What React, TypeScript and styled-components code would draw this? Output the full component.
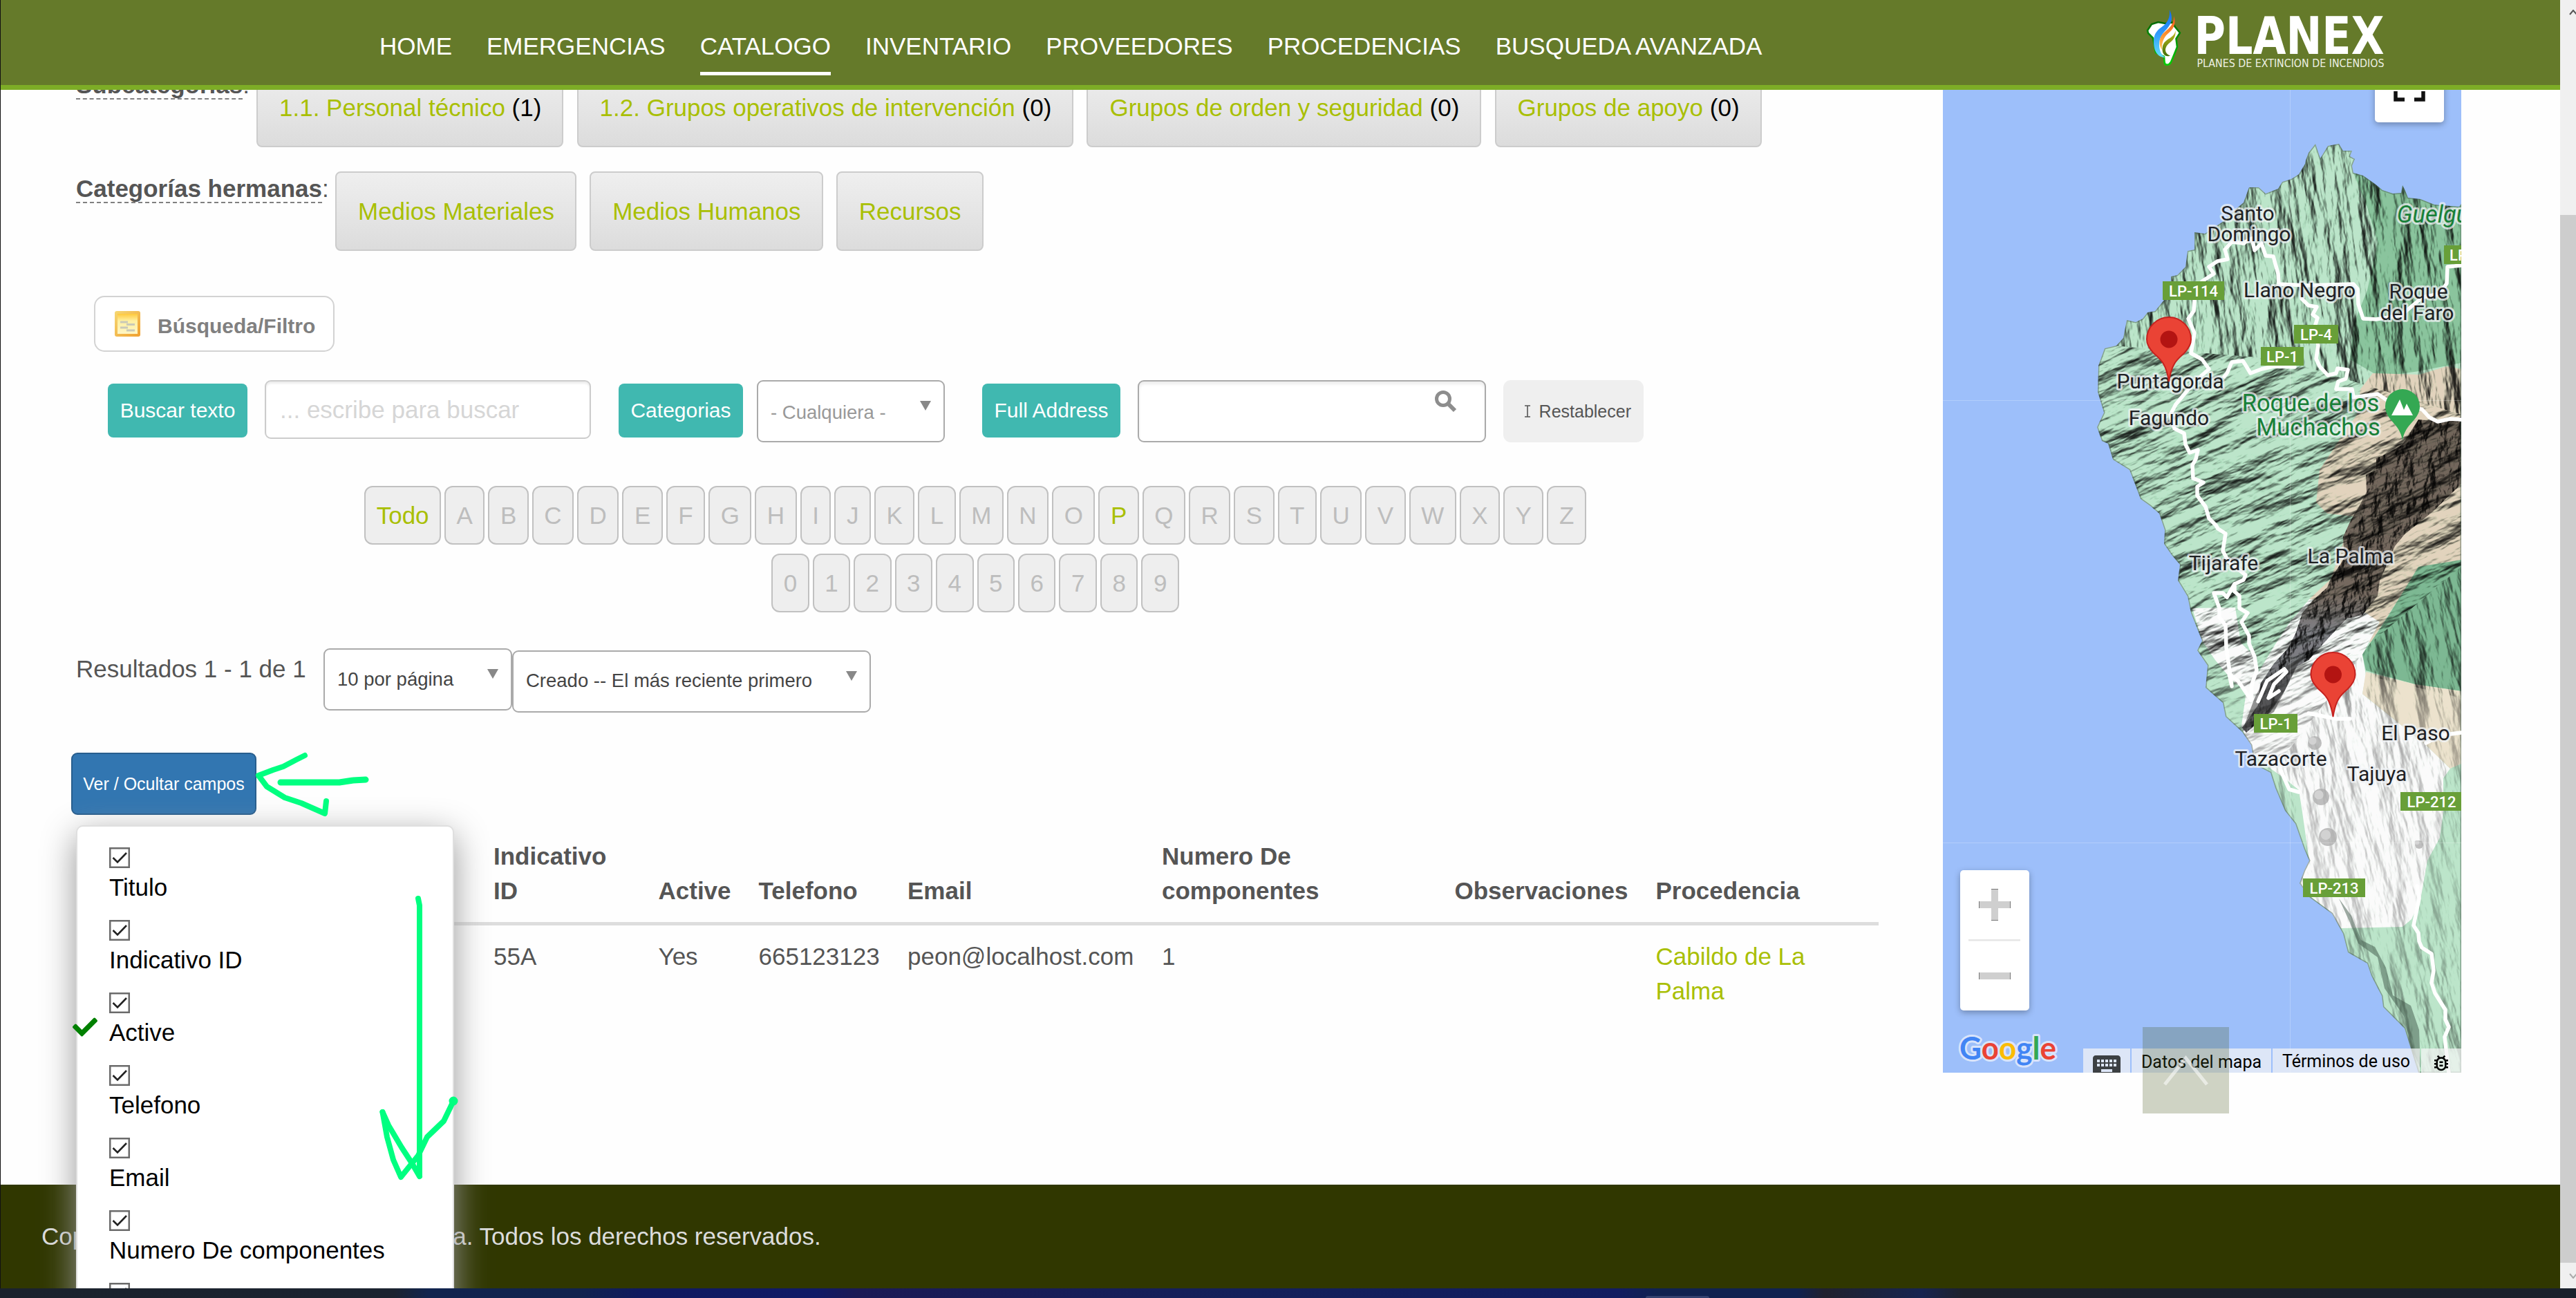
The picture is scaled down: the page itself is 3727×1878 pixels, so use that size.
import React from 'react';
import styled, { createGlobalStyle, css } from 'styled-components';
import { FaCheck } from 'react-icons/fa';
import { MdKeyboard, MdOutlineBugReport } from 'react-icons/md';

const GlobalStyle = createGlobalStyle`
  *, *::before, *::after { box-sizing: border-box; }
  html, body { margin: 0; padding: 0; overflow: hidden; }
  body { font-family: "Liberation Sans", Arial, sans-serif; font-size: 35px; line-height: 50px; color: #555; background: #fefefe; }
`;

const LIME = '#a9bf04';
const TEAL = '#40b8b0';

const Screen = styled.div`
  width: 3727px;
  height: 1878px;
  display: flex;
  flex-direction: column;
  overflow: hidden;
`;

const Viewport = styled.div`
  position: relative;
  height: 1864px;
  display: flex;
  border-left: 1px solid #111;
`;

const Page = styled.div`
  width: 3703px;
  display: flex;
  flex-direction: column;
  overflow: hidden;
  background: #fefefe;
`;

const Header = styled.header`
  position: relative;
  z-index: 3;
  flex: none;
  height: 130px;
  display: flex;
  justify-content: space-between;
  background: #657a2a;
  border-bottom: 7px solid #7dad26;
  padding: 0 254px 0 548px;
`;

const Nav = styled.nav`
  display: flex;
  gap: 50px;
  padding-top: 42px;
`;

const NavLink = styled.a<{ $active?: boolean }>`
  height: 67px;
  color: #fff;
  white-space: nowrap;
  border-bottom: 5px solid ${(p) => (p.$active ? '#fff' : 'transparent')};
`;

const Brand = styled.svg`
  display: block;
  width: 348px;
  height: 110px;
`;

const Main = styled.main`
  flex: none;
  height: 1584px;
  display: flex;
  padding: 0 143px 0 109px;
  justify-content: space-between;
`;

const Content = styled.section`
  width: 2608px;
  display: flex;
  flex-direction: column;
  align-items: flex-start;
`;

const CategoryRow = styled.div<{ $top: number }>`
  display: flex;
  height: 115px;
  margin-top: ${(p) => p.$top}px;
`;

const RowLabel = styled.div<{ $width: number }>`
  width: ${(p) => p.$width}px;
  flex: none;
  white-space: nowrap;
`;

const Term = styled.strong`
  border-bottom: 2px dashed #808080;
`;

const Chips = styled.div`
  display: flex;
  gap: 19.2px;
`;

const Chip = styled.div`
  height: 115px;
  padding: 31px 30px 31px 31px;
  border: 2px solid #ccc;
  border-radius: 8px;
  background: linear-gradient(#efefef, #dcdcdc);
  color: #000;
  white-space: nowrap;
  a { color: ${LIME}; }
`;

const FilterToggle = styled.button`
  height: 81px;
  width: 348px;
  margin: 65px 0 0 26px;
  padding: 0 0 0 28px;
  display: flex;
  align-items: center;
  gap: 25px;
  border: 2px solid #d3d3d3;
  border-radius: 15px;
  background: #fff;
  color: #808080;
  font: bold 30px "Liberation Sans", Arial, sans-serif;
  span { padding-top: 6px; }
`;

const FilterRow = styled.form`
  display: flex;
  height: 90px;
  margin: 41px 0 0 46px;
`;

const FieldTag = styled.label<{ $width: number; $left?: number }>`
  width: ${(p) => p.$width}px;
  height: 78px;
  margin: 5px 0 0 ${(p) => p.$left ?? 0}px;
  border-radius: 8px;
  background: ${TEAL};
  color: #fff;
  font-size: 30px;
  line-height: 78px;
  text-align: center;
  white-space: nowrap;
`;

const SearchInput = styled.input`
  width: 472px;
  height: 85px;
  margin-left: 25px;
  padding: 0 20px;
  border: 2px solid #ccc;
  border-radius: 9px;
  box-shadow: inset 0 3px 3px rgba(0, 0, 0, 0.075);
  background: #fff;
  font: 35px "Liberation Sans", Arial, sans-serif;
  &::placeholder { color: #d6d6d6; opacity: 1; }
`;

const SelectBox = styled.div<{ $width: number; $left?: number; $top?: number; $center?: number; $muted?: boolean }>`
  width: ${(p) => p.$width}px;
  height: 90px;
  margin: ${(p) => p.$top ?? 0}px 0 0 ${(p) => p.$left ?? 0}px;
  padding: 0 18px;
  display: flex;
  justify-content: space-between;
  border: 2px solid #aaa;
  border-radius: 9px;
  background: #fff;
  color: ${(p) => (p.$muted ? '#999' : '#444')};
  font-size: 27.5px;
  line-height: ${(p) => (p.$center ?? 43) * 2}px;
  white-space: nowrap;
`;

const Caret = styled.span`
  width: 0;
  height: 0;
  margin-top: 28px;
  border: 8px solid transparent;
  border-top: 14px solid #888;
  border-bottom: 0;
`;

const AddressBox = styled(SelectBox)`
  justify-content: flex-end;
  padding: 12px 39px 0 0;
  box-shadow: inset 0 4px 4px rgba(0, 0, 0, 0.07);
`;

const ResetButton = styled.button`
  width: 203px;
  height: 90px;
  margin-left: 25px;
  padding: 0 18px 0 31px;
  display: flex;
  justify-content: space-between;
  align-items: center;
  border: 0;
  border-radius: 11px;
  background: #efefef;
  color: #555;
  font: 25px "Liberation Sans", Arial, sans-serif;
`;

const Alphabet = styled.div<{ $top: number }>`
  align-self: stretch;
  display: flex;
  justify-content: center;
  gap: 5px;
  height: 85px;
  margin: ${(p) => p.$top}px 6px 0 0;
`;

const Key = styled.a<{ $on?: boolean }>`
  padding: 0 15.5px;
  border: 2px solid #c1c1c1;
  border-radius: 12px;
  background: #eee;
  color: ${(p) => (p.$on ? LIME : '#bdbdbd')};
  line-height: 81px;
`;

const ResultsRow = styled.div`
  display: flex;
  height: 93px;
  margin-top: 52px;
`;

const ResultCount = styled.div`
  width: 358px;
  line-height: 60px;
`;

const ColumnPicker = styled.div`
  position: relative;
  z-index: 2;
  margin: 58px 0 0 -7px;
`;

const PickerButton = styled.button`
  display: block;
  width: 268px;
  height: 90px;
  padding: 0;
  border: 2px solid #285e8e;
  border-radius: 9px;
  background: #3276b1;
  color: #fff;
  font: 25px "Liberation Sans", Arial, sans-serif;
  white-space: nowrap;
`;

const PickerMenu = styled.ul`
  position: absolute;
  left: 7px;
  top: 105px;
  width: 547px;
  height: 800px;
  margin: 0;
  padding: 30px 0 0 46px;
  list-style: none;
  border: 2px solid #dfdfdf;
  border-radius: 10px;
  background: #fff;
  background-clip: padding-box;
  box-shadow: 0 14px 50px #979797;
  color: #000;
`;

const PickerItem = styled.li`
  position: relative;
  height: 105px;
  display: flex;
  flex-direction: column;
  gap: 3px;
`;

const Box = styled.svg`
  display: block;
  flex: none;
  width: 30px;
  height: 30px;
`;

const SelectedMark = styled(FaCheck)`
  position: absolute;
  left: -53px;
  top: 32px;
  width: 36px;
  height: 36px;
  color: #008000;
`;

const Table = styled.table`
  width: 2608px;
  margin-top: 15px;
  table-layout: fixed;
  border-collapse: separate;
  border-spacing: 0;
  text-align: left;
  th, td { padding: 20px; }
  th { height: 145px; vertical-align: bottom; border-bottom: 5px solid #ddd; }
  td { vertical-align: top; }
  a { color: ${LIME}; }
`;

const MapPanel = styled.aside`
  position: relative;
  width: 750px;
  height: 1422px;
  overflow: hidden;
  background: #9dbffa;
`;

const Terrain = styled.svg`
  display: block;
  width: 750px;
  height: 1422px;
`;

const FullscreenControl = styled.div`
  position: absolute;
  left: 625px;
  top: -53px;
  width: 100px;
  height: 100px;
  display: flex;
  justify-content: center;
  align-items: center;
  border-radius: 5px;
  background: #fff;
  box-shadow: 0 3px 10px rgba(0, 0, 0, 0.3);
`;

const ZoomControl = styled.div`
  position: absolute;
  left: 25px;
  top: 1129px;
  width: 100px;
  height: 203px;
  border-radius: 5px;
  background: #fff;
  box-shadow: 0 3px 10px rgba(0, 0, 0, 0.3);
`;

const Attribution = styled.div`
  position: absolute;
  right: 0;
  bottom: 0;
  height: 35px;
  display: flex;
  gap: 2px;
  color: #000;
  font: 25px/35px Roboto, sans-serif;
`;

const Credit = styled.div<{ $width: number; $drop?: number }>`
  width: ${(p) => p.$width}px;
  height: 35px;
  padding-top: ${(p) => p.$drop ?? 0}px;
  display: flex;
  justify-content: center;
  overflow: hidden;
  white-space: nowrap;
  background: rgba(245, 245, 245, 0.72);
`;

const ToTop = styled.a`
  position: absolute;
  z-index: 3;
  left: 3099px;
  top: 1486px;
  width: 125px;
  height: 125px;
  background: rgba(68, 84, 24, 0.25);
`;

const Footer = styled.footer`
  flex: none;
  height: 150px;
  padding-left: 59px;
  background: #303700;
  color: #dcdcdc;
  line-height: 150px;
  white-space: nowrap;
`;

const Owner = styled.span`
  word-spacing: 1.2px;
`;

const ScrollTrack = styled.div`
  width: 23px;
  height: 1864px;
  padding-top: 311px;
  overflow: hidden;
  background: #f0f0f0;
`;

const ScrollThumb = styled.div`
  height: 1516px;
  background: #cdcdcd;
`;

const ScrollArrow = styled.svg<{ $top: number }>`
  position: absolute;
  left: 3716px;
  top: ${(p) => p.$top}px;
  width: 14px;
  height: 8px;
`;

const Taskbar = styled.div`
  height: 14px;
  display: flex;
  align-items: flex-end;
  padding-left: 2381px;
  background: linear-gradient(90deg, #1b222d 0, #1b2330 570px, #11244e 620px, #11234e 840px, #10195f 930px, #101a66 1180px, #1b1a55 1240px, #14205a 1800px, #121c60 2340px, #102250 2400px, #102250 2600px, #20212e 2640px, #172450 2780px, #1d212c 2840px, #1a212c 100%);
`;

const TaskTab = styled.div`
  width: 92px;
  height: 3px;
  border-radius: 4px 4px 0 0;
  background: #33416f;
`;

const Annotation = styled.svg`
  position: absolute;
  z-index: 4;
  left: 358px;
  top: 1060px;
  width: 340px;
  height: 680px;
  pointer-events: none;
`;

const haloText = css`
  font-family: Roboto, sans-serif;
  font-size: 30px;
  text-anchor: middle;
  paint-order: stroke;
  stroke: rgba(240, 243, 246, 0.72);
  stroke-width: 6px;
  stroke-linejoin: round;
`;

const Place = styled.text`
  ${haloText}
  fill: #202124;
`;

const Park = styled.text`
  ${haloText}
  font-size: 34.5px;
  fill: #188038;
`;

const ShieldText = styled.text`
  font: 500 22px Roboto, sans-serif;
  text-anchor: middle;
  fill: #fff;
`;

const LAND =
  'M3561 295 L3558 299 L3522 296 L3502 288 L3484 286 L3480 276 L3476 268 L3474 279 L3462 280 L3447 275 L3436 266 L3419 254 L3405 250 L3403 240 L3407 230 L3400 226 L3403 218 L3390 218 L3384 208 L3368 211 L3357 229 L3350 208 L3340 221 L3336 232 L3335 237 L3326 252 L3315 259 L3302 263 L3296 273 L3278 280 L3268 271 L3254 271 L3246 293 L3233 304 L3220 318 L3199 332 L3190 338 L3175 336 L3175 361 L3165 363 L3162 386 L3150 398 L3141 400 L3141 414 L3131 434 L3118 450 L3107 452 L3100 461 L3090 466 L3077 463 L3072 489 L3062 500 L3045 504 L3036 529 L3035 567 L3044 597 L3034 618 L3041 638 L3050 642 L3057 665 L3081 680 L3090 703 L3097 722 L3111 732 L3124 743 L3132 767 L3131 787 L3142 803 L3154 817 L3151 840 L3165 863 L3170 887 L3186 927 L3179 941 L3194 963 L3191 995 L3216 1017 L3220 1037 L3244 1059 L3257 1078 L3262 1106 L3285 1118 L3292 1140 L3306 1173 L3321 1192 L3334 1229 L3341 1245 L3334 1259 L3327 1278 L3341 1298 L3374 1322 L3390 1351 L3397 1378 L3425 1394 L3431 1412 L3446 1441 L3448 1457 L3479 1488 L3487 1514 L3499 1552 L3561 1552 Z';

const LOWLAND =
  'M3172 880 L3234 879 L3242 930 L3262 950 L3268 972 L3290 935 L3311 903 L3341 867 L3380 870 L3423 887 L3443 900 L3418 947 L3423 977 L3418 1004 L3459 1037 L3510 1078 L3545 1112 L3535 1126 L3535 1175 L3530 1212 L3512 1245 L3502 1302 L3489 1330 L3476 1341 L3387 1343 L3370 1318 L3327 1285 L3330 1262 L3341 1245 L3331 1175 L3326 1143 L3305 1126 L3285 1112 L3257 1090 L3243 1050 L3250 1000 L3230 985 L3205 955 L3186 927 Z';

const ROCK =
  'M3499 607 L3476 643 L3456 655 L3438 663 L3438 680 L3423 687 L3424 712 L3413 733 L3400 755 L3390 777 L3392 807 L3372 838 L3367 850 L3345 870 L3331 887 L3322 915 L3311 937 L3290 960 L3270 990 L3267 1020 L3244 1053 L3250 1060 L3285 1030 L3305 1000 L3322 965 L3340 955 L3367 925 L3395 895 L3418 890 L3440 862 L3443 840 L3465 790 L3479 773 L3520 740 L3561 700 L3561 603 L3530 610 Z';

const ROADS = [
  'M3247 352 L3229 350 L3219 361 L3223 375 L3208 378 L3196 386 L3203 396 L3186 407 L3175 434 L3174 450 L3166 461 L3175 482 L3170 511 L3186 520 L3196 534 L3180 548 L3163 567 L3148 585 L3140 600 L3146 620 L3160 627 L3162 643 L3168 655 L3180 651 L3177 664 L3172 673 L3173 692 L3188 698 L3179 704 L3179 717 L3191 733 L3196 750 L3206 760 L3209 765 L3220 772 L3216 797 L3224 812 L3249 832 L3246 839 L3233 845 L3233 856 L3240 862 L3240 880 L3252 887 L3243 900 L3254 920 L3254 931 L3262 950 L3265 970 L3258 990 L3257 1013',
  'M3233 845 L3222 864 L3216 858 L3203 858 L3211 880 L3211 893 L3220 905 L3221 937 L3229 993 L3225 975 L3238 985 L3257 1013',
  'M3245 352 L3258 345 L3262 362 L3272 352 L3278 370 L3289 371 L3296 396 L3297 411 L3337 413 L3405 411 L3411 418 L3412 440 L3419 461 L3438 462 L3474 456 L3505 430 L3530 425 L3540 410 L3541 386 L3561 384',
  'M3330 432 L3340 442 L3352 444 L3346 455 L3353 460 L3350 470 L3354 500 L3351 519 L3356 530 L3368 543 L3380 540 L3382 533 L3397 535 L3394 548 L3383 552 L3380 563 L3403 563 L3405 575 L3440 570 L3470 590 L3504 592 L3515 604 L3527 610 L3545 606 L3561 607',
  'M3218 545 L3222 540 L3229 524 L3245 522 L3250 530 L3256 540 L3272 534 L3290 530 L3320 531',
  'M3267 1015 L3280 985 L3305 968 L3308 972 L3290 990 L3282 1010 L3297 1000',
  'M3340 1032 L3380 1040 L3400 1040',
  'M3561 1060 L3530 1064 L3510 1075',
  'M3300 1115 L3312 1142 L3326 1146',
  'M3497 1282 L3500 1300 L3492 1339 L3499 1350 L3500 1362 L3504 1371 L3518 1380 L3521 1404 L3518 1422 L3523 1437 L3538 1461 L3538 1475 L3543 1486 L3537 1500 L3543 1552',
];

const PLACES: [string, number, number][] = [
  ['Santo', 3252, 319],
  ['Domingo', 3254, 349],
  ['Llano Negro', 3327, 430],
  ['Roque', 3499, 432],
  ['del Faro', 3497, 463],
  ['Puntagorda', 3140, 562],
  ['Fagundo', 3138, 615],
  ['La Palma', 3401, 815],
  ['Tijarafe', 3217, 825],
  ['El Paso', 3495, 1071],
  ['Tazacorte', 3300, 1108],
  ['Tajuya', 3439, 1130],
];

const SHIELDS: [string, number, number, number][] = [
  ['LP-114', 3129, 407, 89],
  ['LP-4', 3319, 470, 64],
  ['LP-1', 3271, 502, 62],
  ['LP-1', 3536, 355, 62],
  ['LP-1', 3261, 1033, 63],
  ['LP-212', 3473, 1146, 90],
  ['LP-213', 3332, 1271, 90],
];

const Pin = ({ x, y }: { x: number; y: number }) => (
  <g transform={`translate(${x} ${y})`}>
    <path
      d="M0 0 C-4 -26 -12 -32 -21 -40 C-29 -48 -32 -54 -32 -61 A32 32 0 0 1 32 -61 C32 -54 29 -48 21 -40 C12 -32 4 -26 0 0 Z"
      fill="#ea4335"
      stroke="#c5221f"
      strokeWidth="2"
    />
    <circle cy="-61" r="12.5" fill="#b31412" />
  </g>
);

const IslandMap = () => (
  <Terrain viewBox="2811 130 750 1422">
    <defs>
      <clipPath id="land"><path d={LAND} /></clipPath>
      <clipPath id="rock"><path d={ROCK} /></clipPath>
      <linearGradient id="rockFill" x1="0" y1="600" x2="0" y2="1050" gradientUnits="userSpaceOnUse">
        <stop offset="0" stopColor="#71655a" />
        <stop offset="0.58" stopColor="#75695f" />
        <stop offset="0.7" stopColor="#808086" />
        <stop offset="1" stopColor="#6e6e72" />
      </linearGradient>
      <linearGradient id="reliefFade" x1="0" y1="200" x2="0" y2="1552" gradientUnits="userSpaceOnUse">
        <stop offset="0" stopColor="#fff" />
        <stop offset="0.54" stopColor="#fff" />
        <stop offset="0.62" stopColor="#777" />
        <stop offset="0.8" stopColor="#555" />
        <stop offset="1" stopColor="#aaa" />
      </linearGradient>
      <mask id="fade" maskUnits="userSpaceOnUse" x="2811" y="130" width="750" height="1422">
        <rect x="2811" y="130" width="750" height="1422" fill="url(#reliefFade)" />
        <path d="M3418 890 L3561 810 L3561 1010 L3423 977 Z" fill="#fff" />
      </mask>
      <filter id="relief" x="0" y="0" width="100%" height="100%" colorInterpolationFilters="sRGB">
        <feTurbulence type="fractalNoise" baseFrequency="0.034 0.009" numOctaves="5" seed="7" />
        <feDiffuseLighting surfaceScale="15" diffuseConstant="1.22" lightingColor="#f6fff9">
          <feDistantLight azimuth="215" elevation="50" />
        </feDiffuseLighting>
      </filter>
      <filter id="crag" x="0" y="0" width="100%" height="100%" colorInterpolationFilters="sRGB">
        <feTurbulence type="fractalNoise" baseFrequency="0.05 0.03" numOctaves="5" seed="3" />
        <feDiffuseLighting surfaceScale="13" diffuseConstant="1.25" lightingColor="#fff">
          <feDistantLight azimuth="215" elevation="50" />
        </feDiffuseLighting>
      </filter>
      <clipPath id="north"><path d="M2811 130 H3561 V600 L3300 520 L2811 480 Z" /></clipPath>
      <clipPath id="west"><path d="M2811 480 L3300 520 L3561 600 V820 L3430 930 L3300 1100 L2811 1100 Z" /></clipPath>
      <clipPath id="south"><path d="M3561 820 L3430 930 L3300 1100 H2811 V1552 H3561 Z" /></clipPath>
    </defs>
    <rect x="2811" y="130" width="750" height="1422" fill="#9dbffa" />
    <g clipPath="url(#land)">
      <path d={LAND} fill="#bce5ca" />
      <path d="M3405 250 L3425 300 L3440 350 L3425 420 L3405 470 L3400 520 L3443 545 L3500 537 L3561 525 V280 Z" fill="#8ac49d" />
      <path d="M3433 540 L3500 542 L3540 530 L3561 534 V830 L3499 822 L3479 853 L3430 930 L3341 867 L3372 838 L3392 780 L3405 747 L3367 743 L3351 727 L3356 680 L3387 633 L3410 600 L3415 563 Z" fill="#e2d3bd" />
      <path d={LOWLAND} fill="#fbfbfb" />
      <path d={ROCK} fill="url(#rockFill)" />
      <path d="M3561 810 L3499 820 L3479 853 L3450 900 L3418 947 L3423 970 L3494 990 L3561 1000 Z" fill="#7db893" />
      <path d="M3423 972 L3494 990 L3561 1000 V1105 L3545 1112 L3510 1078 L3459 1037 L3418 1004 Z" fill="#ece2cd" />
      <g mask="url(#fade)" style={{ mixBlendMode: 'multiply' }}>
        <g clipPath="url(#north)">
          <rect x="2950" y="130" width="720" height="560" filter="url(#relief)" transform="rotate(-8 3300 400)" opacity="0.85" />
        </g>
        <g clipPath="url(#west)">
          <g transform="rotate(64 3300 800)">
            <rect x="2850" y="350" width="900" height="900" filter="url(#relief)" opacity="0.85" />
          </g>
        </g>
        <g clipPath="url(#south)">
          <rect x="3150" y="780" width="520" height="900" filter="url(#relief)" transform="rotate(-14 3400 1200)" opacity="0.7" />
        </g>
      </g>
      <g clipPath="url(#rock)" style={{ mixBlendMode: 'multiply' }}>
        <rect x="3230" y="590" width="340" height="480" filter="url(#crag)" opacity="0.85" />
      </g>
      <path d="M3384 1300 L3402 1325 L3416 1360 L3436 1370 L3452 1400 L3462 1440 L3488 1455 L3500 1490 L3502 1545 L3490 1520 L3478 1470 L3450 1430 L3440 1385 L3412 1365 L3400 1335 Z" fill="#3f5849" opacity="0.5" />
      <path d="M3244 1058 L3262 1010 L3275 985 L3330 950 L3318 975 L3290 1030 Z" fill="#3c3c3c" opacity="0.55" />
      {[[3358, 1153, 12], [3368, 1211, 13], [3349, 1075, 10], [3500, 1222, 6]].map(([x, y, r]) => (
        <g key={y}>
          <circle cx={x} cy={y} r={r} fill="#a9a9a9" opacity="0.75" />
          <circle cx={x - 3} cy={y - 3} r={r * 0.55} fill="#d2d2d2" />
        </g>
      ))}
      <path d={LAND} fill="none" stroke="#48604f" strokeWidth="3" opacity="0.5" />
      {ROADS.map((d) => (
        <path key={d} d={d} fill="none" stroke="#fff" strokeWidth="5.5" strokeLinejoin="round" strokeLinecap="round" />
      ))}
    </g>
    <path d="M3313.5 130 V1552 M2811 579.5 H3561 M2811 1219.5 H3561" stroke="#fff" strokeOpacity="0.22" />
    {PLACES.map(([name, x, y]) => (
      <Place key={name} x={x} y={y}>{name}</Place>
    ))}
    <Park x="3343" y="595">Roque de los</Park>
    <Park x="3354" y="630">Muchachos</Park>
    <Park x="3520" y="322" fontStyle="italic">Guelgu</Park>
    {SHIELDS.map(([name, x, y, w]) => (
      <g key={name + y}>
        <rect x={x} y={y} width={w} height="27" fill="#689f38" />
        <ShieldText x={x + w / 2} y={y + 21.5}>{name}</ShieldText>
      </g>
    ))}
    <path d="M3476 637 C3472 612 3451 608 3451 588 A25 25 0 0 1 3501 588 C3501 608 3480 612 3476 637 Z" fill="#34a853" />
    <path d="M3460 601 L3472 578 L3478 593 L3482 584 L3491 601 Z" fill="#fff" />
    <Pin x={3138} y={552} />
    <Pin x={3375.5} y={1037} />
    <text
      x="2835"
      y="1533"
      textLength="140"
      lengthAdjust="spacingAndGlyphs"
      fontFamily="Lato, sans-serif"
      fontWeight="700"
      fontSize="46"
      stroke="#d9e4fb"
      strokeWidth="6"
      strokeLinejoin="round"
      paintOrder="stroke"
    >
      <tspan fill="#4285f4">G</tspan><tspan fill="#ea4335">o</tspan><tspan fill="#fbbc04">o</tspan><tspan fill="#4285f4">g</tspan><tspan fill="#34a853">l</tspan><tspan fill="#ea4335">e</tspan>
    </text>
  </Terrain>
);

const Logo = () => (
  <Brand viewBox="3101 0 348 110">
    <defs>
      <linearGradient id="coast" x1="0" y1="32" x2="0" y2="95" gradientUnits="userSpaceOnUse">
        <stop offset="0" stopColor="#076a07" />
        <stop offset="1" stopColor="#06d006" />
      </linearGradient>
      <linearGradient id="flameBlue" x1="0" y1="14" x2="0" y2="83" gradientUnits="userSpaceOnUse">
        <stop offset="0" stopColor="#0f6cf2" />
        <stop offset="0.5" stopColor="#319bfb" />
        <stop offset="1" stopColor="#62e0fb" />
      </linearGradient>
      <linearGradient id="flameOrange" x1="0" y1="23" x2="0" y2="72" gradientUnits="userSpaceOnUse">
        <stop offset="0" stopColor="#f4501c" />
        <stop offset="0.5" stopColor="#fc8c2c" />
        <stop offset="1" stopColor="#fcc65c" />
      </linearGradient>
      <linearGradient id="flameGreen" x1="0" y1="44" x2="0" y2="82" gradientUnits="userSpaceOnUse">
        <stop offset="0" stopColor="#c4bc1c" />
        <stop offset="1" stopColor="#3f6f06" />
      </linearGradient>
    </defs>
    <path
      d="M3106 44 L3112 35 L3121.500 32 L3132 34 L3142 32.500 L3146 39 L3153 47.500 L3147.500 56 L3149 68 L3145 78 L3140 90 C3137 95 3131 95 3130.500 90 L3130 82 L3118 76 L3114 55 L3107 48 Z"
      fill="#fff"
      stroke="url(#coast)"
      strokeWidth="2.600"
      strokeLinejoin="round"
    />
    <path d="M3137.700 14 C3143 24 3142 33 3134 42 C3128 48 3124 54 3123 62 C3122.500 71 3125 79 3131.500 83 C3122 83 3115 76 3115 60 C3115 48 3121 43 3128 38 C3136 32 3139 24 3137.700 14 Z" fill="url(#flameBlue)" />
    <path d="M3144 23 C3147.500 33 3145 40 3138 46.500 C3131 52 3126 60 3127 72 C3122 66 3122.500 55 3128 49 C3135 42 3145 37 3144 23 Z" fill="url(#flameOrange)" />
    <path d="M3146.700 44 C3147 54 3143 58 3138 62 C3129 69 3131 78 3139 80.500 C3132 83.500 3127 78 3127.500 70 C3128 60 3136 57 3140 54 C3144 51 3146 48 3146.700 44 Z" fill="url(#flameGreen)" />
    <text x="3173.500" y="77.500" textLength="275" lengthAdjust="spacingAndGlyphs" fontFamily="DejaVu Sans, sans-serif" fontWeight="700" fontSize="74" fill="#fff">PLANEX</text>
    <text x="3177.500" y="97" textLength="271" lengthAdjust="spacingAndGlyphs" fontFamily="DejaVu Sans, sans-serif" fontSize="16.500" fill="#edf0e4">PLANES DE EXTINCION DE INCENDIOS</text>
  </Brand>
);

const NAV = ['HOME', 'EMERGENCIAS', 'CATALOGO', 'INVENTARIO', 'PROVEEDORES', 'PROCEDENCIAS', 'BUSQUEDA AVANZADA'];
const SUBCATEGORIES: [string, number][] = [
  ['1.1. Personal técnico', 1],
  ['1.2. Grupos operativos de intervención', 0],
  ['Grupos de orden y seguridad', 0],
  ['Grupos de apoyo', 0],
];
const SIBLINGS = ['Medios Materiales', 'Medios Humanos', 'Recursos'];
const LETTERS = ['Todo', ...'ABCDEFGHIJKLMNOPQRSTUVWXYZ'.split('')];
const FIELDS = ['Titulo', 'Indicativo ID', 'Active', 'Telefono', 'Email', 'Numero De componentes', ''];
const COLUMN_WIDTHS = [584, 238.5, 145, 215.5, 368, 423.5, 291, 342.5];

export default function App() {
  return (
    <Screen>
      <GlobalStyle />
      <Viewport>
        <Page>
          <Header>
            <Nav>
              {NAV.map((item) => (
                <NavLink key={item} $active={item === 'CATALOGO'}>{item}</NavLink>
              ))}
            </Nav>
            <Logo />
          </Header>
          <Main>
            <Content>
              <CategoryRow $top={-32}>
                <RowLabel $width={261}><Term>Subcategorías</Term>:</RowLabel>
                <Chips>
                  {SUBCATEGORIES.map(([name, count]) => (
                    <Chip key={name}><a>{name}</a> ({count})</Chip>
                  ))}
                </Chips>
              </CategoryRow>
              <CategoryRow $top={35}>
                <RowLabel $width={375}><Term>Categorías hermanas</Term>:</RowLabel>
                <Chips>
                  {SIBLINGS.map((name) => (
                    <Chip key={name}><a>{name}</a></Chip>
                  ))}
                </Chips>
              </CategoryRow>

              <FilterToggle>
                <svg width="37" height="37" viewBox="0 0 37 37">
                  <defs>
                    <linearGradient id="note" x1="0" y1="0" x2="1" y2="1">
                      <stop offset="0" stopColor="#f6d873" />
                      <stop offset="1" stopColor="#f0a030" />
                    </linearGradient>
                    <linearGradient id="paper" x1="0" y1="0" x2="0" y2="1">
                      <stop offset="0" stopColor="#ffc93c" />
                      <stop offset="0.35" stopColor="#fff0a0" />
                      <stop offset="1" stopColor="#fff6c4" />
                    </linearGradient>
                  </defs>
                  <rect width="37" height="37" rx="3" fill="url(#note)" />
                  <rect x="4" y="4" width="29" height="29" fill="url(#paper)" />
                  <path d="M8 16 H19 M17 19.500 H29 M8 24 H19 M17 28 H29" stroke="#c9c9b8" strokeWidth="3" />
                </svg>
                <span>Búsqueda/Filtro</span>
              </FilterToggle>

              <FilterRow>
                <FieldTag $width={202}>Buscar texto</FieldTag>
                <SearchInput placeholder="... escribe para buscar" />
                <FieldTag $width={180} $left={40}>Categorias</FieldTag>
                <SelectBox $width={272} $left={20} $center={45} $muted>- Cualquiera - <Caret /></SelectBox>
                <FieldTag $width={200} $left={54}>Full Address</FieldTag>
                <AddressBox $width={504} $left={25}>
                  <svg width="34" height="34" viewBox="0 0 34 34" fill="none" stroke="#8d8d8d">
                    <circle cx="13" cy="13" r="9.500" strokeWidth="5" />
                    <path d="M20 20 L30 30" strokeWidth="6" />
                  </svg>
                </AddressBox>
                <ResetButton type="button">
                  <svg width="8" height="18" viewBox="0 0 8 18" stroke="#555" strokeWidth="1.6">
                    <path d="M0 1 H8 M0 17 H8 M4 1 V17" />
                  </svg>
                  Restablecer
                </ResetButton>
              </FilterRow>

              <Alphabet $top={63}>
                {LETTERS.map((l) => (
                  <Key key={l} $on={l === 'Todo' || l === 'P'}>{l}</Key>
                ))}
              </Alphabet>
              <Alphabet $top={13}>
                {'0123456789'.split('').map((d) => (
                  <Key key={d}>{d}</Key>
                ))}
              </Alphabet>

              <ResultsRow>
                <ResultCount>Resultados 1 - 1 de 1</ResultCount>
                <SelectBox $width={273}>10 por página <Caret /></SelectBox>
                <SelectBox $width={519} $top={3} $center={41.5}>Creado -- El más reciente primero <Caret /></SelectBox>
              </ResultsRow>

              <ColumnPicker>
                <PickerButton>Ver / Ocultar campos</PickerButton>
                <PickerMenu>
                  {FIELDS.map((f, i) => (
                    <PickerItem key={i}>
                      <Box viewBox="0 0 30 30">
                        <rect x="1.25" y="1.25" width="27.5" height="27.5" fill="#fff" stroke="#6b6b6b" strokeWidth="2.5" />
                        <path d="M5.500 15 L12 21.500 L25 8" fill="none" stroke="#222" strokeWidth="2.6" />
                      </Box>
                      {f}
                      {f === 'Active' && <SelectedMark />}
                    </PickerItem>
                  ))}
                </PickerMenu>
              </ColumnPicker>

              <Table>
                <colgroup>
                  {COLUMN_WIDTHS.map((w, i) => <col key={i} width={w} />)}
                </colgroup>
                <thead>
                  <tr>
                    <th />
                    <th>Indicativo ID</th>
                    <th>Active</th>
                    <th>Telefono</th>
                    <th>Email</th>
                    <th>Numero De<br />componentes</th>
                    <th>Observaciones</th>
                    <th>Procedencia</th>
                  </tr>
                </thead>
                <tbody>
                  <tr>
                    <td />
                    <td>55A</td>
                    <td>Yes</td>
                    <td>665123123</td>
                    <td>peon@localhost.com</td>
                    <td>1</td>
                    <td />
                    <td><a>Cabildo de La<br />Palma</a></td>
                  </tr>
                </tbody>
              </Table>
            </Content>

            <MapPanel>
              <IslandMap />
              <FullscreenControl>
                <svg width="46" height="46" viewBox="0 0 46 46" fill="none" stroke="#111" strokeWidth="5.500">
                  <path d="M3 15 V3 H16 M30 3 H43 V15 M43 28 V40 H30 M16 40 H3 V28" />
                </svg>
              </FullscreenControl>
              <ZoomControl>
                <svg width="100" height="203" viewBox="0 0 100 203" fill="#cfcfcf">
                  <path d="M27 45 H45 V27 H55 V45 H73 V55 H55 V73 H45 V55 H27 Z" />
                  <rect x="12" y="100" width="75" height="2.5" fill="#e6e6e6" />
                  <rect x="27" y="148" width="46" height="10" />
                  <path d="M27.500 45 V55 M72.500 45 V55 M45 27.500 H55 M45 72.500 H55 M27.500 148 V158 M72.500 148 V158" stroke="#777" />
                </svg>
              </ZoomControl>
              <Attribution>
                <Credit $width={68}><MdKeyboard size={48} color="#3c4043" /></Credit>
                <Credit $width={202} $drop={2}>Datos del mapa</Credit>
                <Credit $width={213} $drop={1}>Términos de uso</Credit>
                <Credit $width={58} $drop={6}><MdOutlineBugReport size={30} /></Credit>
              </Attribution>
            </MapPanel>
          </Main>
          <Footer>
            <Owner>Copyright © 2022 Cabildo de La Palma</Owner>
            <span>. Todos los derechos reservados.</span>
          </Footer>
        </Page>
        <ScrollTrack><ScrollThumb /></ScrollTrack>
        <ScrollArrow $top={14} viewBox="0 0 14 8"><path d="M1 7 L6 1 L11 7" fill="none" stroke="#555" strokeWidth="2" /></ScrollArrow>
        <ScrollArrow $top={1842} viewBox="0 0 14 8"><path d="M1 1 L6 7 L11 1" fill="none" stroke="#aaa" strokeWidth="2" /></ScrollArrow>
        <ToTop>
          <svg width="125" height="125" viewBox="0 0 125 125" fill="none" stroke="#fff" strokeOpacity="0.55" strokeWidth="5">
            <path d="M32 83 L62.500 45 L93 83" />
          </svg>
        </ToTop>
        <Annotation viewBox="360 1060 340 680" fill="none" stroke="#00ff80" strokeLinecap="round" strokeLinejoin="round">
          <path d="M442 1093 L430 1099 L411 1109 L396 1114 L375 1122 L387 1138 L413 1154 L437 1162 L471 1177 L473 1159" strokeWidth="8" />
          <path d="M407 1132 L492 1132 L512 1129 L530 1128" strokeWidth="9" />
          <path d="M606 1300 L608 1310 V1701" strokeWidth="8" />
          <path d="M554.500 1609 L561 1645 L570 1678 L581 1703 L606 1672 L619 1645 L643 1622 L657 1593" strokeWidth="8" />
          <path d="M554.500 1609 L563 1628 L582 1660 L597 1683 L608 1702" strokeWidth="8" />
          <circle cx="657" cy="1593" r="3" strokeWidth="7" />
        </Annotation>
      </Viewport>
      <Taskbar><TaskTab /></Taskbar>
    </Screen>
  );
}
